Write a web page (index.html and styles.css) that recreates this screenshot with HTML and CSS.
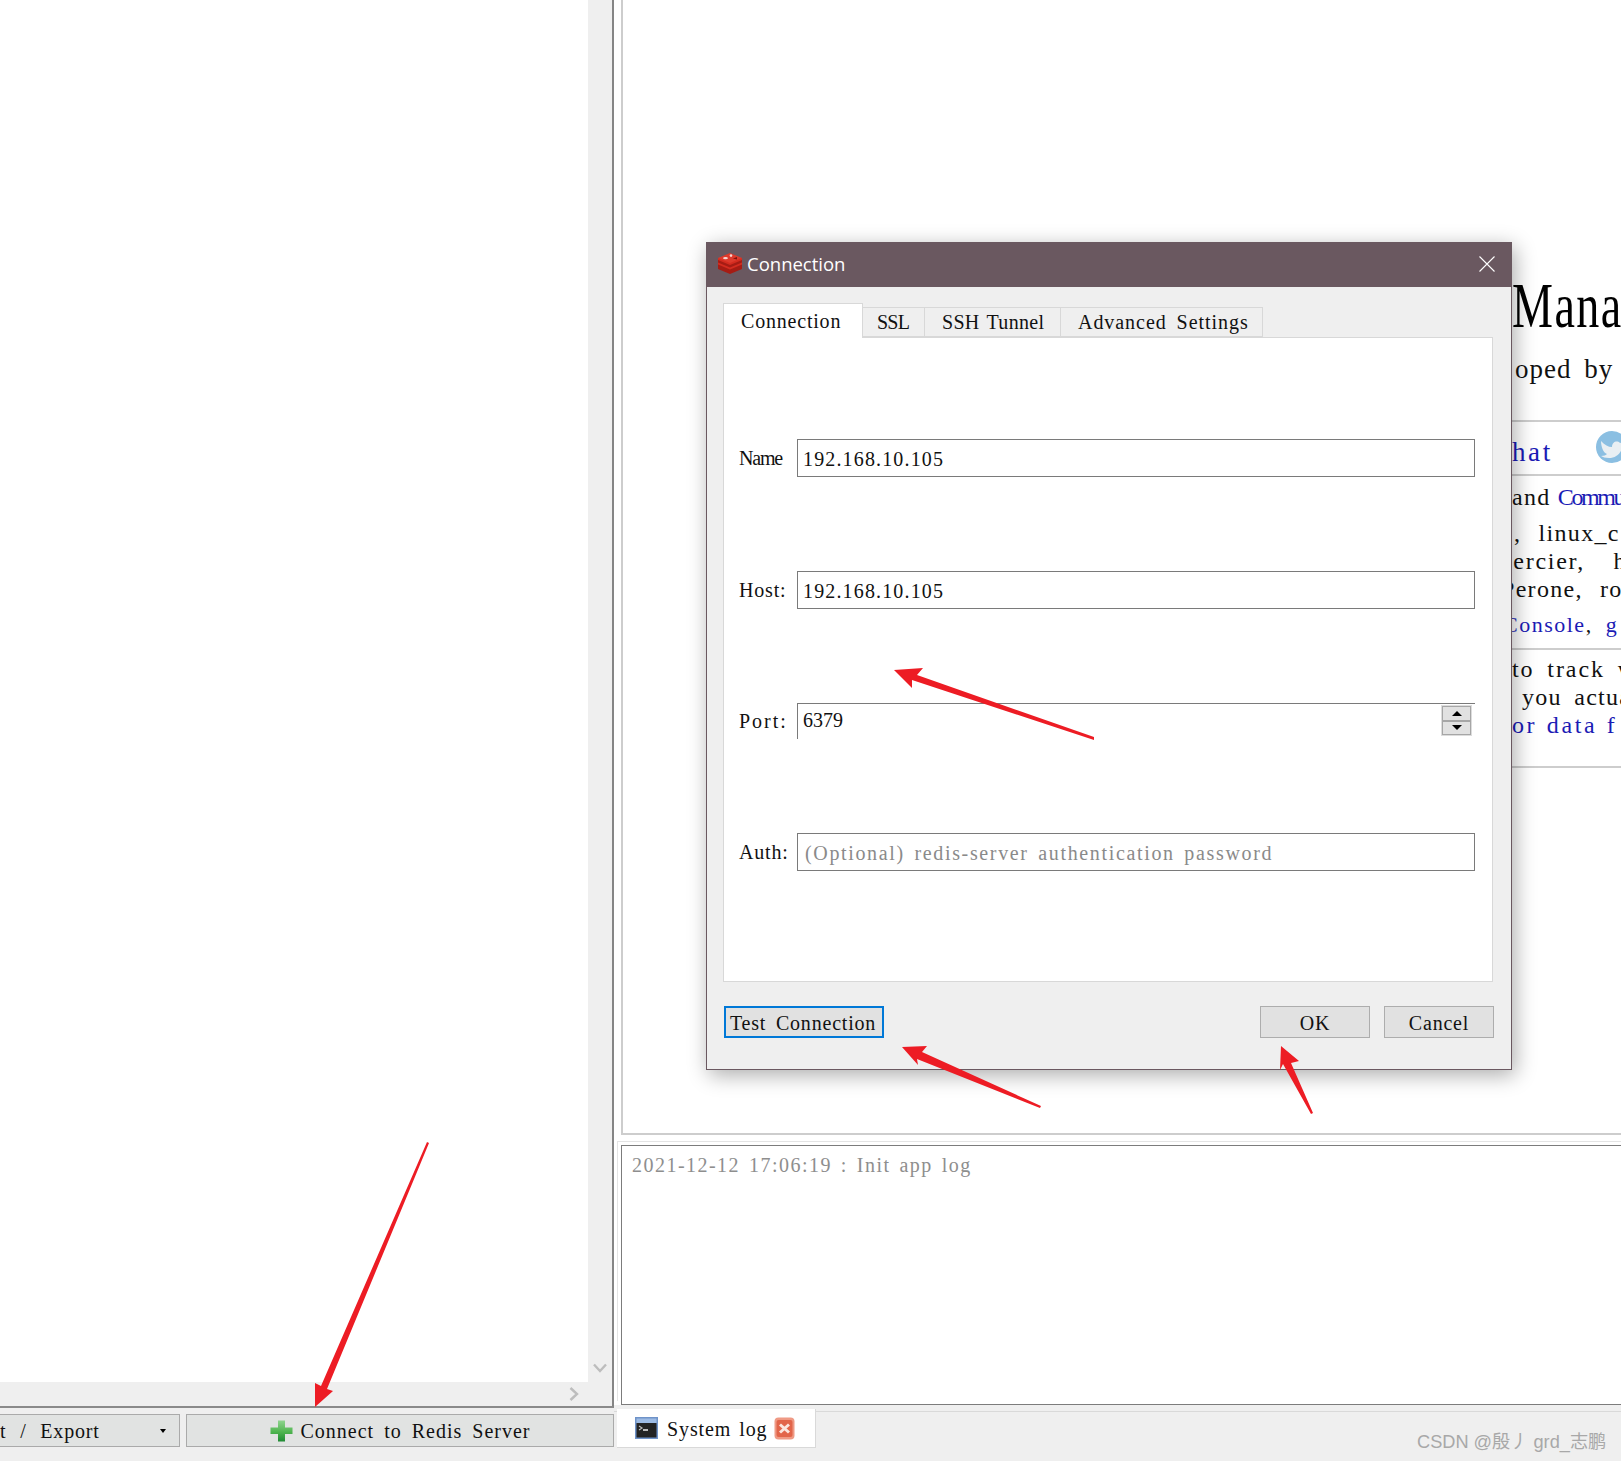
FILE: index.html
```html
<!DOCTYPE html>
<html lang="en">
<head>
<meta charset="utf-8">
<title>Connection</title>
<link rel="stylesheet" href="styles.css">
</head>
<body>
<div class="app">
  <aside class="left">
    <div class="left-frame">
      <div class="tree-row">
        <div class="tree"></div>
        <div class="vscroll">
          <svg class="chev" width="14" height="10" viewBox="0 0 14 10"><path d="M1 1.5 L7 8 L13 1.5" fill="none" stroke="#bdbdbd" stroke-width="2.4"/></svg>
        </div>
      </div>
      <div class="hscroll">
        <svg class="chev" width="10" height="14" viewBox="0 0 10 14"><path d="M1.5 1 L8 7 L1.5 13" fill="none" stroke="#bdbdbd" stroke-width="2.4"/></svg>
      </div>
    </div>
    <div class="left-actions">
      <div class="btn-flat btn-import"><span>t / Export</span><i class="caret"></i></div>
      <div class="btn-flat btn-connect">
        <svg width="23" height="22" viewBox="0 0 23 22">
          <defs><linearGradient id="plusg" x1="0" y1="0" x2="0" y2="1"><stop offset="0" stop-color="#8fd48f"/><stop offset=".55" stop-color="#4fb44f"/><stop offset="1" stop-color="#1f8a34"/></linearGradient></defs>
          <path d="M8 0.5 H15 V7.5 H22.5 V14 H15 V21.5 H8 V14 H0.5 V7.5 H8 Z" fill="url(#plusg)"/>
        </svg>
        <span>Connect to Redis Server</span>
      </div>
    </div>
  </aside>

  <main class="right">
    <section class="about">
      <div class="ln title"><span class="title-text">Mana</span></div>
      <div class="ln sub">oped by</div>
      <hr class="rule rule-a">
      <div class="ln chat"><a class="link chat-link">hat</a>
        <svg class="tw" width="34" height="34" viewBox="0 0 34 34"><circle cx="17" cy="17" r="16" fill="#8bbfe2"/><path d="M6 11 C10 15 13 17 17 17 C17 12 22 10 25 13 L29 12 L27 16 C27 23 21 28 14 28 C10 28 8 27 6 26 C9 26 11 25 12 24 C8 23 6 16 6 11 Z" fill="#e9eff3"/></svg>
      </div>
      <hr class="rule rule-b">
      <div class="ln body and">and <a class="link commu">Commu</a></div>
      <div class="ln body first lx">, linux_c</div>
      <div class="ln body mc">mercier, h</div>
      <div class="ln body pe">Perone, ro</div>
      <div class="ln console"><a class="link">Console</a>, <a class="link">g</a></div>
      <hr class="rule rule-c">
      <div class="ln body second">to track w</div>
      <div class="ln body yo">you actua</div>
      <div class="ln body fl"><a class="link">or data f</a></div>
      <hr class="rule rule-d">
    </section>
    <section class="log">2021-12-12 17:06:19 : Init app log</section>
    <nav class="logtabs">
      <div class="logtab">
        <svg width="23" height="22" viewBox="0 0 23 22"><rect width="23" height="22" fill="#6f93c9"/><rect x="1.5" y="1.5" width="20" height="5" fill="#9dbbe4"/><rect x="1.5" y="6" width="20" height="14.5" fill="#232323"/><path d="M4 9 L7 11 L4 13" fill="none" stroke="#bbb" stroke-width="1.2"/><rect x="8" y="12" width="5" height="2" fill="#bbb"/></svg>
        <span>System log</span>
        <svg class="x" width="21" height="23" viewBox="0 0 21 23"><rect x="0.5" y="0.5" width="20" height="22" rx="4" fill="#ef9a85"/><rect x="2.5" y="3" width="16" height="17" rx="2" fill="#e2654a"/><path d="M6 7.5 L15 15.5 M15 7.5 L6 15.5" stroke="#fbe6df" stroke-width="3"/></svg>
      </div>
    </nav>
  </main>

  <div class="dialog">
    <header class="dlg-title">
      <svg width="24" height="21" viewBox="0 0 24 21">
        <path d="M0 5.5 V16 L12 21 L24 16 V5.5 Z" fill="#a61c14"/>
        <path d="M0 9.5 L12 14.5 L24 9.5 V11.5 L12 16.5 L0 11.5 Z" fill="#d42c20"/>
        <path d="M0 5 V7 L12 12 L24 7 V5 Z" fill="#d42c20"/>
        <path d="M12 0 L24 5 L12 10 L0 5 Z" fill="#de3a2c"/>
        <circle cx="13" cy="2.6" r="1.3" fill="#f7d5d0"/><ellipse cx="7.5" cy="5.2" rx="2.4" ry="1.1" fill="#f7d5d0"/><path d="M15 5.5 L19 4 L19 6.5 Z" fill="#7a120c"/>
      </svg>
      <span class="dlg-name">Connection</span>
      <svg class="dlg-close" width="16" height="16" viewBox="0 0 16 16"><path d="M0.5 0.5 L15.5 15.5 M15.5 0.5 L0.5 15.5" stroke="#fff" stroke-width="1.1"/></svg>
    </header>
    <div class="dlg-body">
      <div class="tabs">
        <div class="tab tab-active">Connection</div>
        <div class="tab tab-ssl">SSL</div>
        <div class="tab tab-tunnel">SSH Tunnel</div>
        <div class="tab tab-adv">Advanced Settings</div>
      </div>
      <div class="pane">
        <div class="form">
          <label class="lbl lbl-name">Name</label><div class="field num">192.168.10.105</div>
          <label class="lbl">Host:</label><div class="field num">192.168.10.105</div>
          <label class="lbl lbl-port">Port:</label>
          <div class="field field-port"><span class="port-val">6379</span>
            <div class="spin"><div class="spin-btn"><i class="tri-up"></i></div><div class="spin-btn"><i class="tri-down"></i></div></div>
          </div>
          <label class="lbl">Auth:</label><div class="field placeholder">(Optional) redis-server authentication password</div>
        </div>
      </div>
      <div class="dlg-actions">
        <div class="btn btn-test">Test Connection</div>
        <div class="btn-right">
          <div class="btn btn-std">OK</div>
          <div class="btn btn-std">Cancel</div>
        </div>
      </div>
    </div>
  </div>

  <svg class="arrows" width="1621" height="1461" viewBox="0 0 1621 1461">
    <polygon points="429,1143 327,1389 333,1391 315,1407 315,1383 321,1386 427,1142"/>
    <polygon points="894,670 923,668 917,675 1094,737 1094,740 912,680 912,688"/>
    <polygon points="902,1047 927,1046 922,1052 1041,1106 1040,1108 917,1059 918,1065"/>
    <polygon points="1281,1046 1299,1061 1291,1063 1313,1113 1311,1114 1283,1064 1280,1070"/>
  </svg>
  <div class="watermark">CSDN @殷丿 grd_志鹏</div>
</div>
</body>
</html>
```
FILE: styles.css
```css
* { box-sizing: border-box; }
html, body { margin: 0; padding: 0; }
body { width: 1621px; height: 1461px; overflow: hidden; font-family: "Liberation Serif", "Noto Sans CJK SC", serif; font-size: 20px; letter-spacing: .8px; word-spacing: 4px; color: #111; }
.app { position: relative; width: 1621px; height: 1461px; overflow: hidden; display: grid; grid-template-columns: 614px 1fr; background: #efefef; }

/* left column */
.left { display: flex; flex-direction: column; }
.left-frame { height: 1408px; border-right: 2px solid #858585; border-bottom: 2px solid #8a8a8a; display: flex; flex-direction: column; }
.tree-row { height: 1382px; display: flex; }
.tree { flex: 1; background: #fff; }
.vscroll { width: 24px; background: #efefef; display: flex; align-items: flex-end; justify-content: center; padding-bottom: 9px; }
.hscroll { flex: 1; background: #efefef; display: flex; align-items: center; justify-content: flex-end; padding-right: 33px; }
.chev { display: block; }
.left-actions { display: grid; grid-template-columns: 180px 428px; gap: 6px; margin-top: 6px; }
.btn-flat { height: 33px; background: #e1e3e2; border: 1px solid #aaa; display: flex; align-items: center; padding-top: 1px; }
.btn-import { border-left: 0; justify-content: space-between; padding-right: 13px; word-spacing: 8px; }
.caret { width: 0; height: 0; border-left: 3.5px solid transparent; border-right: 3.5px solid transparent; border-top: 4px solid #000; margin-top: -1px; }
.btn-connect { justify-content: center; gap: 8px; letter-spacing: 1px; word-spacing: 4px; }

/* right column */
.right { display: flex; flex-direction: column; background: #fff; }
.about { height: 1135px; margin-left: 7px; background: #fff; border-left: 2px solid #cdcdcd; border-bottom: 2px solid #cdcdcd; overflow: hidden; }
.ln { padding-left: 889px; white-space: nowrap; overflow: hidden; }
.title { height: 70px; margin-top: 271px; line-height: 70px; font-size: 64px; letter-spacing: 2px; color: #000; }
.title-text { display: inline-block; transform: scaleX(.72); transform-origin: left center; }
.sub { height: 36px; margin-top: 10px; padding-left: 892px; line-height: 36px; font-size: 27px; letter-spacing: 1px; word-spacing: 5px; }
.rule { margin: 0 0 0 800px; height: 2px; border: 0; background: #cdcdcd; }
.rule-a { margin-top: 33px; }
.rule-b { margin-top: 4px; }
.rule-c { margin-top: 9px; }
.rule-d { margin-top: 27px; }
.chat { height: 36px; margin-top: 12px; line-height: 36px; font-size: 27px; letter-spacing: 2.6px; display: flex; gap: 42px; overflow: visible; }
.tw { margin-top: -4px; flex: none; }
.link { color: #1b1bb5; }
.body { height: 28px; line-height: 28px; font-size: 24px; letter-spacing: 1.3px; word-spacing: 5px; }
.and { height: 30px; line-height: 30px; margin-top: 6px; word-spacing: 0; }
.commu { letter-spacing: -2.4px; }
.first { margin-top: 7px; }
.lx { padding-left: 891px; word-spacing: 10px; }
.mc { padding-left: 870px; letter-spacing: 1.7px; word-spacing: 21px; }
.pe { padding-left: 878px; word-spacing: 10px; }
.yo { padding-left: 899px; }
.fl { letter-spacing: 2.6px; word-spacing: 1px; }
.console { height: 28px; margin-top: 8px; padding-left: 880px; line-height: 28px; font-size: 22px; letter-spacing: 1.5px; word-spacing: 6px; }
.second { margin-top: 5px; letter-spacing: 1.9px; }

.log { height: 260px; margin-top: 10px; margin-left: 7px; padding: 7px 0 0 10px; background: #fff; border-top: 1px solid #7c7c7c; border-left: 1px solid #7c7c7c; border-bottom: 1px solid #7c7c7c; box-shadow: -3px -3px 0 0 #fff, -4px -4px 0 0 #e4e4e4; line-height: 24px; color: #8e8e8e; white-space: nowrap; letter-spacing: 1.47px; word-spacing: 2.5px; }
.logtabs { flex: 1; margin-top: 6px; background: #efefef; border-top: 1px solid #d9d9d9; box-shadow: 0 -6px 0 #efefef; }
.logtab { width: 199px; height: 39px; margin: -3px 0 0 3px; padding: 2px 0 0 18px; background: #fff; border-right: 1px solid #d9d9d9; border-bottom: 1px solid #d9d9d9; display: flex; align-items: center; }
.logtab span { margin-left: 9px; letter-spacing: .9px; word-spacing: 2px; }
.logtab .x { margin-left: 7px; margin-top: -2px; }
.logtab svg:first-child { margin-top: -2px; }

/* dialog */
.dialog { position: absolute; left: 706px; top: 242px; width: 806px; height: 828px; background: #efefef; border: 1px solid #6a5860; border-top: 0; box-shadow: 3px 5px 20px rgba(0, 0, 0, .33); display: flex; flex-direction: column; }
.dlg-title { height: 45px; margin: 0 -1px; padding: 0 17px 2px 12px; background: #6a5860; color: #fff; display: flex; align-items: center; }
.dlg-name { margin-left: 5px; font-family: "Open Sans", "Liberation Sans", sans-serif; font-size: 18.5px; letter-spacing: 0; }
.dlg-close { margin-left: auto; }
.dlg-body { flex: 1; padding: 16px 18px 0 16px; display: flex; flex-direction: column; }
.tabs { display: flex; align-items: flex-end; height: 34px; position: relative; }
.tab { height: 30px; line-height: 29px; padding-left: 17px; background: #efefef; border: 1px solid #d8d8d8; border-left: 0; white-space: nowrap; }
.tab-active { width: 140px; height: 35px; margin-bottom: -1px; line-height: 34px; background: #fff; border-bottom: 0; border-left: 1px solid #d8d8d8; border-top-width: 1px; position: relative; z-index: 1; padding-left: 17px; }
.tab-ssl { width: 62px; padding-left: 14px; letter-spacing: -.8px; }
.tab-tunnel { width: 136px; letter-spacing: .3px; word-spacing: 2px; }
.tab-adv { width: 202px; letter-spacing: .95px; }
.pane { height: 645px; background: #fff; border: 1px solid #d8d8d8; padding: 101px 16px 0 15px; }
.form { display: grid; grid-template-columns: 58px 678px; grid-template-rows: 38px 38px 36px 38px; row-gap: 94px; }
.lbl { display: flex; align-items: center; padding-top: 1px; }
.lbl-name { letter-spacing: -1.2px; }
.lbl-port { letter-spacing: 2px; }
.field { border: 1px solid #7a7a7a; background: #fff; line-height: 38px; padding-left: 5px; white-space: nowrap; }
.num { letter-spacing: 1.15px; }
.field-port { border-right: 0; border-bottom: 0; display: flex; justify-content: space-between; padding: 1px 3px 0 5px; line-height: 31px; letter-spacing: 0; }
.placeholder { padding-left: 7px; color: #8a8a8a; letter-spacing: 1.65px; word-spacing: 3px; }
.spin { width: 31px; height: 31px; border: 1px solid #dcdcdc; display: flex; flex-direction: column; }
.spin-btn { flex: 1; background: #e1e1e1; border: 1px solid #a6a6a6; display: flex; align-items: center; justify-content: center; }
.tri-up, .tri-down { width: 0; height: 0; border-left: 5px solid transparent; border-right: 5px solid transparent; }
.tri-up { border-bottom: 5px solid #000; }
.tri-down { border-top: 5px solid #000; }
.dlg-actions { display: flex; justify-content: space-between; margin-top: 24px; padding-left: 1px; margin-right: -1px; }
.btn { height: 32px; line-height: 32px; background: #e1e1e1; border: 1px solid #adadad; text-align: center; white-space: nowrap; }
.btn-test { width: 160px; border: 2px solid #0078d7; line-height: 30px; padding-right: 2px; }
.btn-right { display: flex; gap: 14px; }
.btn-std { width: 110px; }

/* overlays */
.arrows { position: absolute; left: 0; top: 0; pointer-events: none; }
.arrows polygon { fill: #ed1c24; }
.watermark { position: absolute; left: 1417px; top: 1430px; font-family: "Liberation Sans", "Noto Sans CJK SC", sans-serif; font-size: 18.2px; letter-spacing: 0; word-spacing: 0; line-height: 24px; color: #a8a8a8; white-space: nowrap; }
```
